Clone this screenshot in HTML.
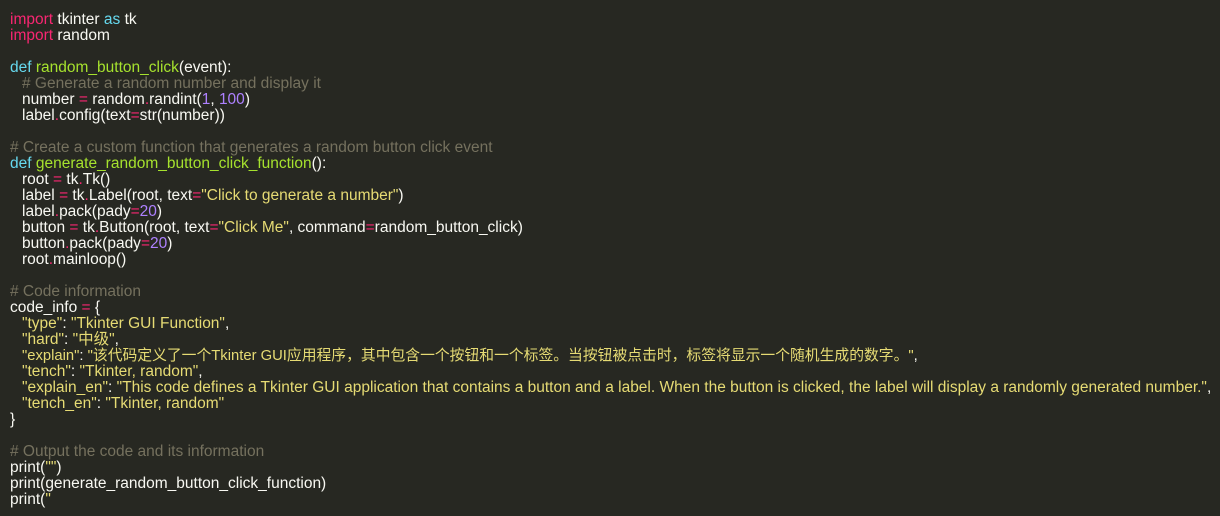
<!DOCTYPE html>
<html><head><meta charset="utf-8"><style>
html,body{margin:0;background:#272822;width:1220px;height:516px;overflow:hidden}
.c{position:absolute;left:10px;top:12px;font-family:"Liberation Sans","Noto Sans CJK SC",sans-serif;font-size:15.5px;line-height:16px;color:#f8f8f2}
.l{height:16px;white-space:pre}
.i{padding-left:12px}
.z{font-size:14.8px}
.k{color:#f92672}.b{color:#66d9ef}.f{color:#a6e22e}.m{color:#75715e}.n{color:#ae81ff}.s{color:#e6db74}
</style></head><body><div class="c"><div class="l"><span class="k">import</span> tkinter <span class="b">as</span> tk</div><div class="l"><span class="k">import</span> random</div><div class="l"></div><div class="l"><span class="b">def</span> <span class="f">random_button_click</span>(event):</div><div class="l i"><span class="m"># Generate a random number and display it</span></div><div class="l i">number <span class="k">=</span> random<span class="k">.</span>randint(<span class="n">1</span>, <span class="n">100</span>)</div><div class="l i">label<span class="k">.</span>config(text<span class="k">=</span>str(number))</div><div class="l"></div><div class="l"><span class="m"># Create a custom function that generates a random button click event</span></div><div class="l"><span class="b">def</span> <span class="f">generate_random_button_click_function</span>():</div><div class="l i">root <span class="k">=</span> tk<span class="k">.</span>Tk()</div><div class="l i">label <span class="k">=</span> tk<span class="k">.</span>Label(root, text<span class="k">=</span><span class="s">"Click to generate a number"</span>)</div><div class="l i">label<span class="k">.</span>pack(pady<span class="k">=</span><span class="n">20</span>)</div><div class="l i">button <span class="k">=</span> tk<span class="k">.</span>Button(root, text<span class="k">=</span><span class="s">"Click Me"</span>, command<span class="k">=</span>random_button_click)</div><div class="l i">button<span class="k">.</span>pack(pady<span class="k">=</span><span class="n">20</span>)</div><div class="l i">root<span class="k">.</span>mainloop()</div><div class="l"></div><div class="l"><span class="m"># Code information</span></div><div class="l">code_info <span class="k">=</span> {</div><div class="l i"><span class="s">"type"</span>: <span class="s">"Tkinter GUI Function"</span>,</div><div class="l i"><span class="s">"hard"</span>: <span class="s">"中级"</span>,</div><div class="l i z"><span class="s">"explain"</span>: <span class="s">"该代码定义了一个Tkinter GUI应用程序，其中包含一个按钮和一个标签。当按钮被点击时，标签将显示一个随机生成的数字。"</span>,</div><div class="l i"><span class="s">"tench"</span>: <span class="s">"Tkinter, random"</span>,</div><div class="l i"><span class="s">"explain_en"</span>: <span class="s">"This code defines a Tkinter GUI application that contains a button and a label. When the button is clicked, the label will display a randomly generated number."</span>,</div><div class="l i"><span class="s">"tench_en"</span>: <span class="s">"Tkinter, random"</span></div><div class="l">}</div><div class="l"></div><div class="l"><span class="m"># Output the code and its information</span></div><div class="l">print(<span class="s">""</span>)</div><div class="l">print(generate_random_button_click_function)</div><div class="l">print(<span class="s">"</span></div></div></body></html>
